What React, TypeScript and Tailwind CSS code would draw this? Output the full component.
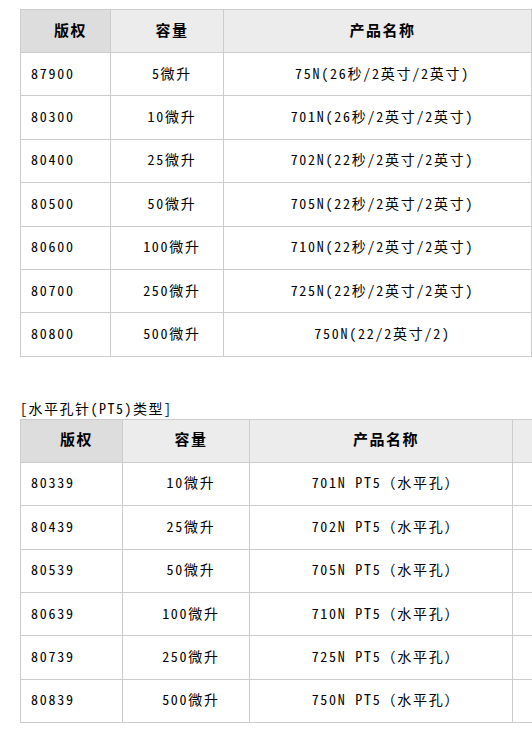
const font = { fontFamily: '"Noto Sans Mono CJK SC", "Noto Sans CJK SC", "Liberation Sans", sans-serif' };

type Row = [string, string, string];

const rows1: Row[] = [
  ['87900', '5微升', '75N(26秒/2英寸/2英寸)'],
  ['80300', '10微升', '701N(26秒/2英寸/2英寸)'],
  ['80400', '25微升', '702N(22秒/2英寸/2英寸)'],
  ['80500', '50微升', '705N(22秒/2英寸/2英寸)'],
  ['80600', '100微升', '710N(22秒/2英寸/2英寸)'],
  ['80700', '250微升', '725N(22秒/2英寸/2英寸)'],
  ['80800', '500微升', '750N(22/2英寸/2)'],
];

const rows2: Row[] = [
  ['80339', '10微升', '701N PT5（水平孔）'],
  ['80439', '25微升', '702N PT5（水平孔）'],
  ['80539', '50微升', '705N PT5（水平孔）'],
  ['80639', '100微升', '710N PT5（水平孔）'],
  ['80739', '250微升', '725N PT5（水平孔）'],
  ['80839', '500微升', '750N PT5（水平孔）'],
];

const cell = 'border-r border-b border-[#cccccc] flex items-center pl-[10px] pb-[2px]';
const head = `${cell} h-[43px] justify-center font-bold tracking-[1.5px] text-[15px]`;
const body = `${cell} h-[43.4px] tracking-[1.75px] text-[14px]`;

function Header({ extra }: { extra?: boolean }) {
  return (
    <>
      <div className={`${head} bg-[#dddddd]`}>版权</div>
      <div className={`${head} bg-[#ececec]`}>容量</div>
      <div className={`${head} bg-[#ececec]`}>产品名称</div>
      {extra && <div className={`${head} bg-[#ececec]`}></div>}
    </>
  );
}

export default function App() {
  return (
    <div className="w-[532px] h-[731px] overflow-hidden bg-white text-black pt-[9px] pl-[20px]" style={font}>
      {/* 第一个表格 */}
      <div className="grid grid-cols-[90px_113px_308px] w-max border-l border-t border-[#cccccc]">
        <Header />
        {rows1.map((r) => (
          <div key={r[0]} className="contents">
            <div className={body}>{r[0]}</div>
            <div className={`${body} justify-center`}>{r[1]}</div>
            <div className={`${body} justify-center`}>{r[2]}</div>
          </div>
        ))}
      </div>

      <p className="mt-[42px] h-[20px] leading-[18px] text-[14px] tracking-[1.5px]">[水平孔针(PT5)类型]</p>

      {/* 水平孔针表格 */}
      <div className="grid grid-cols-[102px_127px_263px_120px] w-max border-l border-t border-[#cccccc]">
        <Header extra />
        {rows2.map((r) => (
          <div key={r[0]} className="contents">
            <div className={body}>{r[0]}</div>
            <div className={`${body} justify-center`}>{r[1]}</div>
            <div className={`${body} justify-center`}>{r[2]}</div>
            <div className={body}></div>
          </div>
        ))}
      </div>
    </div>
  );
}
